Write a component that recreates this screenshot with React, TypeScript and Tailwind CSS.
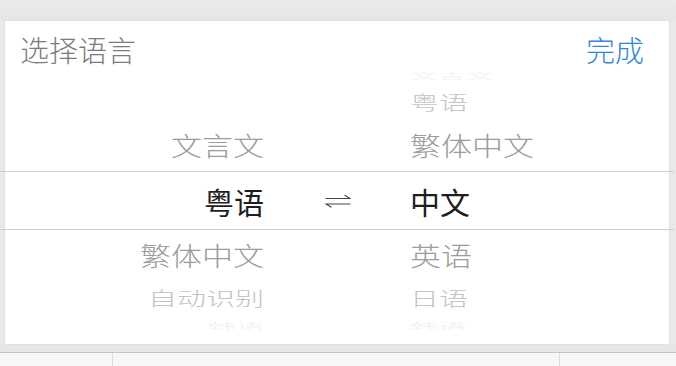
import React from "react";

const font = { fontFamily: '"Noto Sans CJK SC", "Noto Sans", sans-serif' };

type Row = { l: string; r: string; h: string; cls: string };

function Arrows() {
  return (
    <svg width="26" height="14" viewBox="0 0 26 14" fill="none" stroke="#444" strokeWidth="1.2" strokeLinecap="round">
      <path d="M1 4.5 H25 L20 1.5" />
      <path d="M25 10 H1 L6 13" />
    </svg>
  );
}

export default function App() {
  const top: Row[] = [
    { l: "", r: "文言文", h: "h-[18px]", cls: "text-[28px] scale-y-[0.3] text-[#f0f0f0]" },
    { l: "", r: "粤语", h: "h-[34px]", cls: "text-[29px] scale-y-[0.68] text-[#c4c4c4]" },
    { l: "文言文", r: "繁体中文", h: "h-[53px]", cls: "text-[31px] scale-y-[0.86] text-[#9c9c9c]" },
  ];
  const bottom: Row[] = [
    { l: "繁体中文", r: "英语", h: "h-[49px]", cls: "text-[31px] scale-y-[0.86] text-[#9c9c9c]" },
    { l: "自动识别", r: "日语", h: "h-[36px]", cls: "text-[29px] scale-y-[0.68] text-[#c4c4c4]" },
    { l: "韩语", r: "韩语", h: "h-[20px]", cls: "text-[28px] scale-y-[0.3] text-[#f0f0f0]" },
  ];
  const renderRow = (row: Row, i: number) => (
    <div key={i} className={`flex items-center ${row.h}`}>
      <div className={`w-[259px] text-right leading-none ${row.cls}`}>{row.l}</div>
      <div className="w-[146px]" />
      <div className={`flex-1 leading-none ${row.cls}`}>{row.r}</div>
    </div>
  );
  return (
    <div className="w-[676px] h-[366px] bg-[#e9e9eb] flex flex-col overflow-hidden font-light" style={font}>
      <div className="h-[20px] bg-gradient-to-b from-[#ececee] to-[#e6e6e8]" />
      <div className="ml-[4px] mr-[6px] h-[325px] bg-white border border-[#e0e0e2] flex flex-col">
        <div className="h-[45px] flex items-center justify-between pt-[12px] pl-[15px] pr-[25px]">
          <span className="text-[29px] leading-none text-[#7c7c7c]">选择语言</span>
          <span className="text-[29px] leading-none text-[#3487d6]">完成</span>
        </div>
        <div className="flex flex-col">
          {top.map(renderRow)}
          <div className="flex items-center h-[59px] border-y border-[#cfcfcf] -mx-[5px] px-[5px]">
            <div className="w-[259px] text-right text-[30px] leading-none font-normal text-[#1e1e1e]">粤语</div>
            <div className="w-[146px] flex justify-center pl-[2px]">
              <Arrows />
            </div>
            <div className="flex-1 text-[30px] leading-none font-normal text-[#1e1e1e]">中文</div>
          </div>
          {bottom.map(renderRow)}
        </div>
      </div>
      <div className="h-[7px] bg-[#e6e6e8]" />
      <div className="h-[1px] bg-[#c6c6c8]" />
      <div className="flex-1 bg-[#f7f7f8] flex">
        <div className="w-[113px] border-r border-[#dcdcdc]" />
        <div className="w-[447px] border-r border-[#dcdcdc]" />
        <div className="flex-1" />
      </div>
    </div>
  );
}
